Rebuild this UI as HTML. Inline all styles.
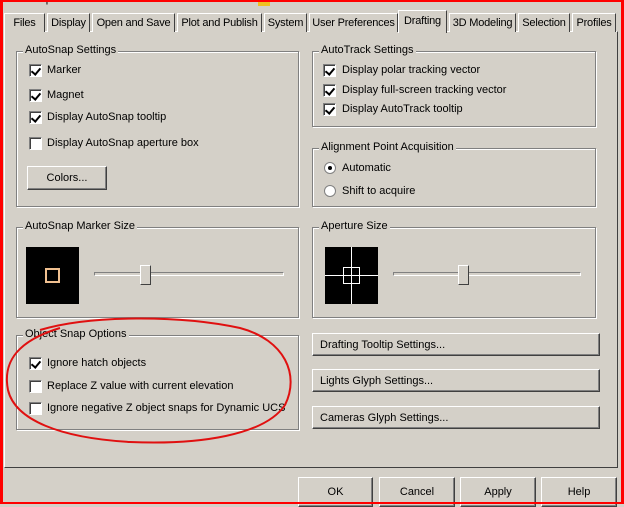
<!DOCTYPE html>
<html><head><style>
*{box-sizing:border-box;margin:0;padding:0}
body{width:624px;height:504px;background:#d4d0c8;position:relative;overflow:hidden;font-family:"Liberation Sans",sans-serif;font-size:11px;color:#000;white-space:nowrap}
.a{position:absolute}
.frame{position:absolute;inset:0;border:solid #f00;border-width:2px 3px 2px 3px;z-index:50;pointer-events:none}
.tab{position:absolute;top:13px;height:19px;border:1px solid #fff;border-bottom:none;border-right:1px solid #404040;padding:3px 0 0;text-align:center;background:#d4d0c8;letter-spacing:-0.2px;overflow:hidden}
.panel{position:absolute;left:4px;top:31px;width:614px;height:437px;border:1px solid;border-color:#fff #404040 #404040 #fff}
.grp{position:absolute;border:1px solid #808080;box-shadow:inset 1px 1px 0 #fff,1px 1px 0 #fff}
.grp>.t{position:absolute;top:-8px;left:6px;background:#d4d0c8;padding:0 2px}
.cb{position:absolute;width:13px;height:13px;background:#fff;border:1px solid;border-color:#808080 #fff #fff #808080;box-shadow:inset 1px 1px 0 #404040}
.cb.on::after{content:"";position:absolute;left:3px;top:1px;width:4px;height:7px;border:solid #000;border-width:0 2px 2px 0;transform:rotate(40deg)}
.lbl{position:absolute}
.btn{position:absolute;border:1px solid;border-color:#fff #404040 #404040 #fff;box-shadow:inset -1px -1px 0 #808080;background:#d4d0c8}
.rd{position:absolute;width:12px;height:12px;border-radius:50%;background:#fff;border:1px solid #808080}
.track{position:absolute;height:4px;border:1px solid;border-color:#808080 #fff #fff #808080}
.thumb{position:absolute;width:11px;height:20px;border:1px solid;border-color:#fff #404040 #404040 #fff;background:#d4d0c8}
</style></head><body>
<div class="a" style="left:6px;top:-7px;color:#000">Current profile:</div>
<div class="a" style="left:258px;top:0;width:12px;height:6px;background:#f0c020"></div>
<div class="panel"></div>
<div class="tab" style="left:4px;width:41px">Files</div>
<div class="tab" style="left:47px;width:43px">Display</div>
<div class="tab" style="left:92px;width:83px">Open and Save</div>
<div class="tab" style="left:177px;width:85px">Plot and Publish</div>
<div class="tab" style="left:264px;width:43px">System</div>
<div class="tab" style="left:309px;width:89px">User Preferences</div>
<div class="tab" style="left:398px;top:10px;height:23px;width:49px;border-bottom:none;z-index:2;padding-top:4px">Drafting</div>
<div class="tab" style="left:449px;width:67px">3D Modeling</div>
<div class="tab" style="left:518px;width:52px">Selection</div>
<div class="tab" style="left:572px;width:44px">Profiles</div>

<div class="grp" style="left:16px;top:51px;width:283px;height:156px"><span class="t">AutoSnap Settings</span></div>
<div class="cb on" style="left:29px;top:64px"></div><div class="lbl" style="left:47px;top:64px">Marker</div>
<div class="cb on" style="left:29px;top:89px"></div><div class="lbl" style="left:47px;top:89px">Magnet</div>
<div class="cb on" style="left:29px;top:111px"></div><div class="lbl" style="left:47px;top:111px">Display AutoSnap tooltip</div>
<div class="cb" style="left:29px;top:137px"></div><div class="lbl" style="left:47px;top:137px">Display AutoSnap aperture box</div>
<div class="btn" style="left:27px;top:166px;width:80px;height:24px;text-align:center;padding-top:5px">Colors...</div>

<div class="grp" style="left:312px;top:51px;width:284px;height:76px"><span class="t">AutoTrack Settings</span></div>
<div class="cb on" style="left:323px;top:64px"></div><div class="lbl" style="left:342px;top:64px">Display polar tracking vector</div>
<div class="cb on" style="left:323px;top:84px"></div><div class="lbl" style="left:342px;top:84px">Display full-screen tracking vector</div>
<div class="cb on" style="left:323px;top:103px"></div><div class="lbl" style="left:342px;top:103px">Display AutoTrack tooltip</div>

<div class="grp" style="left:312px;top:148px;width:284px;height:59px"><span class="t">Alignment Point Acquisition</span></div>
<div class="rd" style="left:324px;top:162px"><div class="a" style="left:3px;top:3px;width:4px;height:4px;border-radius:50%;background:#000"></div></div><div class="lbl" style="left:342px;top:162px">Automatic</div>
<div class="rd" style="left:324px;top:185px"></div><div class="lbl" style="left:342px;top:185px">Shift to acquire</div>

<div class="grp" style="left:16px;top:227px;width:283px;height:91px"><span class="t">AutoSnap Marker Size</span></div>
<div class="a" style="left:26px;top:247px;width:53px;height:57px;background:#000"><div class="a" style="left:19px;top:21px;width:15px;height:15px;border:2px solid #f0c090"></div></div>
<div class="track" style="left:94px;top:272px;width:190px"></div>
<div class="thumb" style="left:140px;top:265px"></div>

<div class="grp" style="left:312px;top:227px;width:284px;height:91px"><span class="t">Aperture Size</span></div>
<div class="a" style="left:325px;top:247px;width:53px;height:57px;background:#000">
<div class="a" style="left:0;top:28px;width:53px;height:1px;background:#fff"></div>
<div class="a" style="left:26px;top:0;width:1px;height:57px;background:#fff"></div>
<div class="a" style="left:18px;top:20px;width:17px;height:17px;border:1px solid #fff"></div></div>
<div class="track" style="left:393px;top:272px;width:188px"></div>
<div class="thumb" style="left:458px;top:265px"></div>

<div class="grp" style="left:16px;top:335px;width:283px;height:95px"><span class="t">Object Snap Options</span></div>
<div class="cb on" style="left:29px;top:357px"></div><div class="lbl" style="left:47px;top:357px">Ignore hatch objects</div>
<div class="cb" style="left:29px;top:380px"></div><div class="lbl" style="left:47px;top:380px">Replace Z value with current elevation</div>
<div class="cb" style="left:29px;top:402px"></div><div class="lbl" style="left:47px;top:402px">Ignore negative Z object snaps for Dynamic UCS</div>

<div class="btn" style="left:312px;top:333px;width:288px;height:23px;padding:5px 0 0 7px">Drafting Tooltip Settings...</div>
<div class="btn" style="left:312px;top:369px;width:288px;height:23px;padding:5px 0 0 7px">Lights Glyph Settings...</div>
<div class="btn" style="left:312px;top:406px;width:288px;height:23px;padding:5px 0 0 7px">Cameras Glyph Settings...</div>

<div class="btn" style="left:298px;top:477px;width:75px;height:30px;text-align:center;padding-top:8px">OK</div>
<div class="btn" style="left:379px;top:477px;width:76px;height:30px;text-align:center;padding-top:8px">Cancel</div>
<div class="btn" style="left:460px;top:477px;width:76px;height:30px;text-align:center;padding-top:8px">Apply</div>
<div class="btn" style="left:541px;top:477px;width:76px;height:30px;text-align:center;padding-top:8px">Help</div>

<svg class="a" style="left:0;top:0;z-index:40" width="624" height="504"><path d="M40 330 C90 315 180 315 240 328 C285 340 300 375 285 405 C265 435 200 445 130 442 C60 438 15 420 8 390 C2 360 20 340 60 328" fill="none" stroke="#e01010" stroke-width="2"/></svg>
<div class="frame"></div>
</body></html>
